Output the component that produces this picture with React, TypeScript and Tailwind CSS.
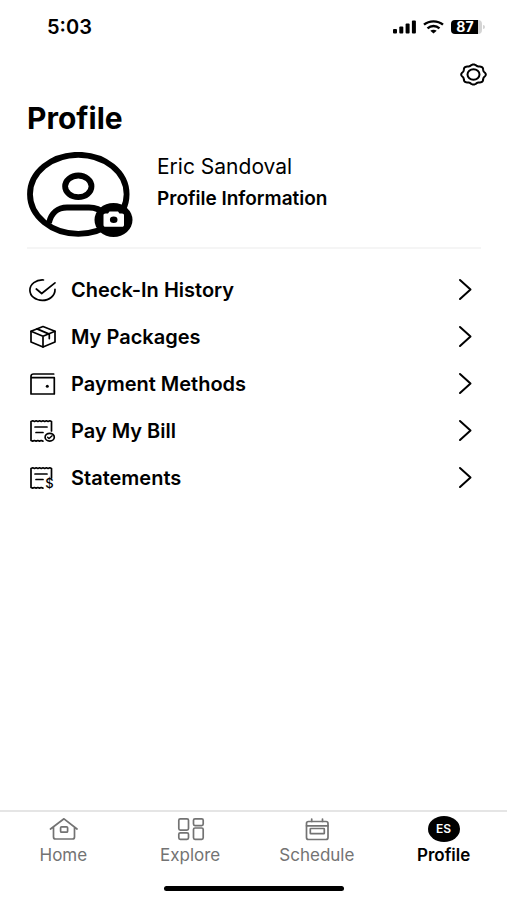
import React from 'react';

interface MenuItem {
    label: string;
    icon: React.ReactNode;
}

interface TabItem {
    label: string;
    icon: React.ReactNode;
    active?: boolean;
}

// Scalloped outline for the settings gear
const gearPath = (cx: number, cy: number, rx: number, ry: number) => {
    const points = Array.from({ length: 96 }, (_, i) => {
        const a = (i / 96) * Math.PI * 2;
        const r = 0.94 + 0.06 * Math.cos(8 * a);
        return `${(cx + rx * r * Math.cos(a)).toFixed(2)} ${(cy + ry * r * Math.sin(a)).toFixed(2)}`;
    });
    return `M${points.join('L')}Z`;
};

const RowIcon: React.FC<{ children: React.ReactNode }> = ({ children }) => (
    <svg
        width="30"
        height="24"
        viewBox="0 0 30 24"
        fill="none"
        stroke="currentColor"
        strokeWidth="1.7"
        strokeLinecap="round"
        strokeLinejoin="round"
        className="flex-none"
        aria-hidden="true"
    >
        {children}
    </svg>
);

const receiptEdge =
    'M23.5 12V2.5l-1.7-.7-1.7.7-1.7-.7-1.7.7-1.7-.7-1.7.7-1.7-.7-1.7.7-1.7-.7-1.7.7-1.7-.7L3 2.5V21.5l1.7.6 1.7-.6 1.7.6 1.7-.6 1.7.6 1.7-.6 1.7.6';

const menuItems: MenuItem[] = [
    {
        label: 'Check-In History',
        icon: (
            <RowIcon>
                <path d="M15.5 2C8 1.5 1.9 6.2 1.9 12.200C1.9 17.9 7.4 22.4 14.3 22.4C21.4 22.4 27.3 17.7 27 11.3" />
                <path d="M8.3 11l5.4 4.500L27 4.800" />
            </RowIcon>
        ),
    },
    {
        label: 'My Packages',
        icon: (
            <RowIcon>
                <path d="M15 1.500L27 6.300V17L15 22L3 17V6.300Z" />
                <path d="M3 6.300l12 5 12-5M15 11.300V22M9 3.900l12.300 5.200v4.500" />
            </RowIcon>
        ),
    },
    {
        label: 'Payment Methods',
        icon: (
            <RowIcon>
                <path d="M25.700 2H5.500C4 2 3 3 3 4.200V22H26.300V5.700H3.500" />
                <circle cx="19.3" cy="14.2" r="1.5" fill="currentColor" stroke="none" />
            </RowIcon>
        ),
    },
    {
        label: 'Pay My Bill',
        icon: (
            <RowIcon>
                <path d={receiptEdge} />
                <path d="M7 8h12M8 13.500h7" />
                <ellipse cx="21.7" cy="18.2" rx="4.6" ry="3.9" />
                <path d="M19.600 18.300l1.500 1.300 3-2.900" strokeWidth="1.4" />
            </RowIcon>
        ),
    },
    {
        label: 'Statements',
        icon: (
            <RowIcon>
                <path d={receiptEdge} />
                <path d="M7 8h12M8 13.500h7" />
                <text
                    x="21.5"
                    y="22"
                    fontSize="13"
                    textAnchor="middle"
                    fill="currentColor"
                    stroke="none"
                    className="font-medium"
                >
                    $
                </text>
            </RowIcon>
        ),
    },
];

const tabs: TabItem[] = [
    {
        label: 'Home',
        icon: (
            <RowIcon>
                <path d="M2.500 12L16 1.800L29 12M5.500 10v10c0 1.200.8 2 2 2h17c1.200 0 2-.8 2-2V10" />
                <rect x="12.6" y="9.8" width="7" height="5.4" rx="1" />
            </RowIcon>
        ),
    },
    {
        label: 'Explore',
        icon: (
            <RowIcon>
                <rect x="3.8" y="1.8" width="9.7" height="11.3" rx="1.5" />
                <rect x="18.5" y="1.8" width="9.7" height="6.8" rx="1.5" />
                <rect x="3.8" y="15.8" width="9.7" height="6.5" rx="1.5" />
                <rect x="18.5" y="11" width="9.7" height="11.3" rx="1.5" />
            </RowIcon>
        ),
    },
    {
        label: 'Schedule',
        icon: (
            <RowIcon>
                <rect x="4.5" y="4.5" width="21.5" height="18" rx="2" />
                <path d="M4.500 8.800h21.500M9.700 2V4.500M20.500 2V4.500" />
                <rect x="8.3" y="11.5" width="14" height="5.2" rx="0.5" />
            </RowIcon>
        ),
    },
    {
        label: 'Profile',
        active: true,
        icon: (
            <span className="flex h-[26px] w-8 flex-none items-center justify-center rounded-[50%] bg-black text-[12px] font-semibold text-white">
                ES
            </span>
        ),
    },
];

const StatusBar = () => (
    <div className="flex h-[54px] items-center justify-between pr-[22px] pl-[47px]">
        <time className="text-[20px] leading-6 font-semibold">5:03</time>
        <div className="flex items-center gap-[7px]">
            <svg width="23" height="14" viewBox="0 0 23 14" fill="currentColor" aria-hidden="true">
                <rect x="0" y="9" width="4" height="4.5" rx="1" />
                <rect x="6.3" y="6.5" width="4" height="7" rx="1" />
                <rect x="12.6" y="3.5" width="4" height="10" rx="1" />
                <rect x="18.9" y="0.5" width="4" height="13" rx="1" />
            </svg>
            <svg width="21" height="14" viewBox="0 0 21 14" fill="none" stroke="currentColor" strokeWidth="2.4" aria-hidden="true">
                <path d="M1 4.700C6.300.3 14.700.3 20 4.700" />
                <path d="M4.500 8.300C8 5.300 13 5.300 16.500 8.300" />
                <path d="M10.500 13.500L7.300 10.700C9.200 9.300 11.800 9.300 13.700 10.700Z" fill="currentColor" stroke="none" />
            </svg>
            <div className="flex items-center gap-px">
                <span className="flex h-[14px] w-[31px] items-center justify-center rounded-[4px] bg-linear-to-r from-black from-87% to-neutral-300 to-87% pr-[3px] text-[14px] leading-none font-bold text-white">
                    87
                </span>
                <span className="h-1 w-[2px] rounded-r-full bg-neutral-300" />
            </div>
        </div>
    </div>
);

const Avatar = () => (
    <button type="button" aria-label="Change photo" className="flex-none">
        <svg width="106" height="86" viewBox="0 0 106 86" fill="none" stroke="currentColor" strokeWidth="5.8">
            <ellipse cx="51.3" cy="42.3" rx="48.3" ry="39.5" />
            <ellipse cx="51.3" cy="34.3" rx="13.2" ry="10.8" />
            <path d="M22 71C24 61 31 55.500 40 55.500H62C69 55.500 74 58 78 62" />
            <ellipse cx="86.5" cy="68" rx="19" ry="17" fill="currentColor" stroke="none" />
            <path
                d="M78.500 61.500H81L82.500 59.500H91L92.500 61.500H95C96.300 61.500 97 62.200 97 63.300V73C97 74.200 96.300 74.800 95 74.800H78.500C77.200 74.800 76.500 74.200 76.500 73V63.300C76.500 62.200 77.200 61.500 78.500 61.500Z"
                fill="white"
                stroke="none"
            />
            <ellipse cx="86.7" cy="67.8" rx="3.8" ry="3.3" fill="currentColor" stroke="none" />
        </svg>
    </button>
);

export default function App() {
    return (
        <div className="flex min-h-screen flex-col bg-white font-['Inter','Liberation_Sans',sans-serif] text-black">
            <StatusBar />

            <header className="pr-5 pl-[27px]">
                <div className="flex justify-end">
                    <button type="button" aria-label="Settings" className="flex h-10 items-center">
                        <svg width="27" height="23" viewBox="0 0 27 23" fill="none" stroke="currentColor" strokeWidth="2">
                            <path d={gearPath(13.5, 11.5, 12.3, 10.1)} />
                            <ellipse cx="13.5" cy="11.5" rx="6" ry="5.2" />
                        </svg>
                    </button>
                </div>
                <h1 className="mt-2 text-[30px] leading-8 font-bold">Profile</h1>
            </header>

            <main className="flex-1 pr-[26px] pl-[27px]">
                <section className="mt-[18px] flex gap-6 border-b-2 border-neutral-100 pb-[9px]">
                    <Avatar />
                    <div className="pt-[3px]">
                        <p className="text-[21px] leading-6">Eric Sandoval</p>
                        <a href="#profile" className="mt-2 block text-[19px] leading-6 font-semibold">
                            Profile Information
                        </a>
                    </div>
                </section>

                <ul className="mt-[17px]">
                    {menuItems.map((item) => (
                        <li key={item.label}>
                            <button type="button" className="flex h-[47px] w-full items-center pr-[9px] pl-px text-left">
                                {item.icon}
                                <span className="ml-[13px] flex-1 text-[20px] leading-6 font-semibold">{item.label}</span>
                                <svg width="14" height="24" viewBox="0 0 14 24" fill="none" stroke="currentColor" strokeWidth="2" strokeLinecap="round" strokeLinejoin="round" aria-hidden="true">
                                    <path d="M2 2L12.500 11.500L2 21" />
                                </svg>
                            </button>
                        </li>
                    ))}
                </ul>
            </main>

            <nav className="border-t-2 border-neutral-200">
                <ul className="grid grid-cols-4">
                    {tabs.map((tab) => (
                        <li key={tab.label}>
                            <a
                                href={`#${tab.label.toLowerCase()}`}
                                aria-current={tab.active ? 'page' : undefined}
                                className={`flex flex-col items-center gap-px pt-1 ${tab.active ? 'font-semibold text-black' : 'text-neutral-500'}`}
                            >
                                <span className="flex h-[26px] items-center">{tab.icon}</span>
                                <span className="text-[17px] leading-6">{tab.label}</span>
                            </a>
                        </li>
                    ))}
                </ul>
                <div className="mx-auto mt-[19px] mb-[9px] h-[5px] w-[180px] rounded-full bg-black" />
            </nav>
        </div>
    );
}
